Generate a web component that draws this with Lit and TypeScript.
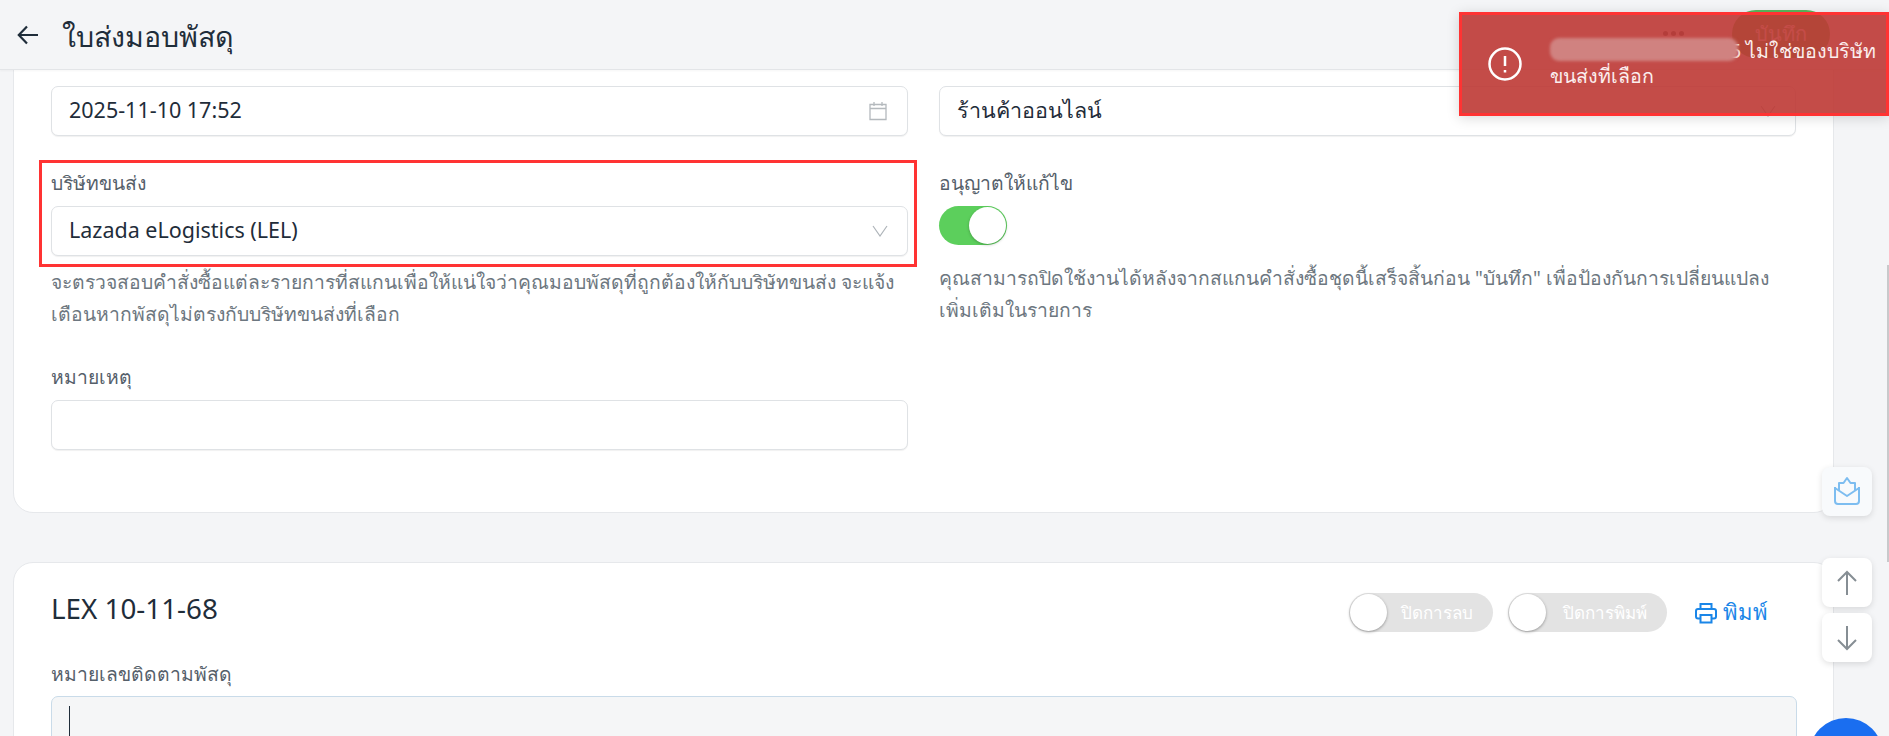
import { LitElement, html, css } from "lit";
import { customElement } from "lit/decorators.js";

const chevron = html`<svg class="chev" viewBox="0 0 16 12" width="16" height="12"><path d="M1 1l7 10 7-10" fill="none" stroke="#aeb4b9" stroke-width="1.2"/></svg>`;

@customElement("app-root")
export class AppRoot extends LitElement {
  static styles = css`
    :host { display: block; height: 736px; overflow: hidden; position: relative; background: #f4f5f7;
      font-family: "Noto Sans", "Open Sans", sans-serif; color: #1f2d3a; }
    .page { display: flex; flex-direction: column; height: 736px; }
    header { flex: none; height: 69px; border-bottom: 1px solid #e3e5e8; display: flex; align-items: center; padding: 0 59px 0 17px; gap: 23px; background: #f4f5f7; position: relative; z-index: 2; box-shadow: 0 1px 2px rgba(0,0,0,.04); }
    header h1 { margin: 0; padding-top: 2px; font-size: 28.6px; font-weight: 400; line-height: 40px; flex: 1; }
    .dots { display: flex; gap: 3px; margin-right: 25px; margin-top: -3px; }
    .dots i { width: 5px; height: 5px; border-radius: 50%; background: #5c6670; }
    .save { width: 98px; height: 48px; border-radius: 24px; background: #5cb85c; color: #fff; font-size: 20px; display: flex; align-items: center; justify-content: center; margin-top: -2px; }
    main { flex: 1; overflow: hidden; padding: 0 55px 0 13px; }
    .card { background: #fff; border: 1px solid #e6e8eb; border-radius: 20px; padding: 30px 36px 0 37px; }
    .card.first { margin-top: -50px; padding-top: 28px; padding-bottom: 62px; }
    .card.second { margin-top: 49px; height: 300px; }
    .grid { display: grid; grid-template-columns: 857px 857px; column-gap: 31px; }
    label { display: block; font-size: 19.3px; line-height: 28px; color: #55606a; margin-bottom: 9px; }
    .field { position: relative; height: 50px; box-sizing: border-box; border: 1px solid #dfe2e5; border-radius: 7px; background: #fff; box-shadow: 0 1px 1px rgba(0,0,0,.06); display: flex; align-items: center; justify-content: space-between; padding: 0 19px 0 17px; font-size: 21.5px; }
    .val { margin-bottom: 3px; }
    .row2 { margin-top: 33px; }
    .help { font-size: 19.3px; line-height: 31.5px; color: #6d7780; margin: 10px 0 0; }
    .help.r { margin-top: 17px; }
    .switch { display: block; width: 68px; height: 39px; border-radius: 20px; background: #5ccf5c; position: relative; margin-top: 3px; }
    .switch::after { content: ""; position: absolute; right: 1px; top: 1px; width: 37px; height: 37px; border-radius: 50%; background: #fff; box-shadow: 0 1px 3px rgba(0,0,0,.25); }
    .note { margin-top: 34px; width: 857px; }
    .titlebar { display: flex; align-items: center; height: 39px; }
    h2 { margin: 0; font-size: 27.8px; font-weight: 400; flex: 1; margin-top: -10px; }
    .pill { height: 39px; border-radius: 20px; background: #e3e3e3; color: #fff; font-size: 17px; display: flex; align-items: center; justify-content: flex-end; padding-right: 20px; box-sizing: border-box; position: relative; margin-right: 15px; }
    .pill::before { content: ""; position: absolute; left: 1px; top: 1px; width: 37px; height: 37px; border-radius: 50%; background: #fff; box-shadow: 0 1px 3px rgba(0,0,0,.35); }
    .p1 { width: 144px; } .p2 { width: 159px; }
    .print { display: flex; align-items: center; gap: 6px; color: #1a86e8; font-size: 22px; margin: 0 29px 0 13px; }
    .lab2 { margin-top: 28px; margin-bottom: 8px; }
    .tracking { height: 60px; border: 1px solid #c9dbe9; border-radius: 7px; background: #f5f6f7; padding: 9px 17px; box-sizing: border-box; }
    .caret { width: 1px; height: 40px; background: #1f2d3a; }
    .toast { position: absolute; left: 1459px; top: 12px; width: 430px; height: 104px; box-sizing: border-box; border: 3px solid #ff3333; background: rgba(190,56,52,.9); display: flex; align-items: center; padding: 0 0 0 25px; gap: 27px; color: #fbeeee; font-size: 19.6px; line-height: 25px; box-shadow: 0 2px 12px rgba(0,0,0,.15); z-index: 5; }
    .toast svg { flex: none; }
    .toast p { margin: -2px 0 0; white-space: nowrap; }
    .blur { display: inline-block; width: 188px; height: 23px; background: #d08280; border-radius: 9px; vertical-align: -3px; margin-right: -8px; filter: blur(1.5px); position: relative; }
    .fabs { position: absolute; z-index: 4; left: 1822px; top: 467px; display: flex; flex-direction: column; width: 50px; }
    .fab { width: 50px; height: 49px; border-radius: 8px; background: #fff; box-shadow: 0 2px 6px rgba(0,0,0,.12); display: flex; align-items: center; justify-content: center; }
    .fab.mail { background: #f8fafc; margin-bottom: 42px; }
    .fab.mail svg { margin-top: -3px; }
    .fab.down { margin-top: 6px; }
    .chat { position: absolute; z-index: 4; left: 1809px; top: 718px; width: 74px; height: 74px; border-radius: 50%; background: #1a6ef0; }
    .thumb { position: absolute; z-index: 4; right: 0; top: 265px; width: 2px; height: 297px; background: #c8c9cb; }
    .redbox { position: absolute; z-index: 3; left: 39px; top: 160px; width: 878px; height: 107px; box-sizing: border-box; border: 3px solid #ff3333; }
  `;

  render() {
    return html`
      <div class="page">
        <header>
          <svg width="22" height="20" viewBox="0 0 22 20"><path d="M21 10H2M10 1.500L1.800 10l8.200 8.500" fill="none" stroke="#1f2d3a" stroke-width="2.200"/></svg>
          <h1>ใบส่งมอบพัสดุ</h1>
          <div class="dots"><i></i><i></i><i></i></div>
          <div class="save">บันทึก</div>
        </header>
        <main>
          <section class="card first">
            <div class="grid">
              <div>
                <label>วันที่</label>
                <div class="field"><span class="val">2025-11-10 17:52</span>
                  <svg width="20" height="20" viewBox="0 0 20 20"><path d="M2 3.500h16v15H2zM2 7.500h16M6 1v4M14 1v4" fill="none" stroke="#b4b9bd" stroke-width="1.300"/></svg>
                </div>
              </div>
              <div>
                <label>ช่องทาง</label>
                <div class="field"><span class="val">ร้านค้าออนไลน์</span> ${chevron}</div>
              </div>
              <div class="row2">
                <label>บริษัทขนส่ง</label>
                <div class="field"><span class="val">Lazada eLogistics (LEL)</span> ${chevron}</div>
                <p class="help">จะตรวจสอบคำสั่งซื้อแต่ละรายการที่สแกนเพื่อให้แน่ใจว่าคุณมอบพัสดุที่ถูกต้องให้กับบริษัทขนส่ง จะแจ้งเตือนหากพัสดุไม่ตรงกับบริษัทขนส่งที่เลือก</p>
              </div>
              <div class="row2">
                <label>อนุญาตให้แก้ไข</label>
                <span class="switch"></span>
                <p class="help r">คุณสามารถปิดใช้งานได้หลังจากสแกนคำสั่งซื้อชุดนี้เสร็จสิ้นก่อน "บันทึก" เพื่อป้องกันการเปลี่ยนแปลงเพิ่มเติมในรายการ</p>
              </div>
            </div>
            <div class="note">
              <label>หมายเหตุ</label>
              <div class="field"></div>
            </div>
          </section>
          <section class="card second">
            <div class="titlebar">
              <h2>LEX 10-11-68</h2>
              <div class="pill p1">ปิดการลบ</div>
              <div class="pill p2">ปิดการพิมพ์</div>
              <div class="print">
                <svg width="22" height="22" viewBox="0 0 22 22" fill="none" stroke="#1a86e8" stroke-width="2"><path d="M5.500 7V2h11v5M5.500 16.500H3a2 2 0 0 1-2-2V9a2 2 0 0 1 2-2h16a2 2 0 0 1 2 2v5.500a2 2 0 0 1-2 2h-2.500"/><path d="M5.500 13h11v7.500h-11z"/></svg>
                พิมพ์
              </div>
            </div>
            <label class="lab2">หมายเลขติดตามพัสดุ</label>
            <div class="tracking"><div class="caret"></div></div>
          </section>
        </main>
      </div>
      <div class="redbox"></div>
      <div class="toast">
        <svg width="36" height="36" viewBox="0 0 36 36" fill="none" stroke="#fff" stroke-width="2.500"><circle cx="18" cy="18" r="15.500"/><path d="M18 10v10M18 24v2.500"/></svg>
        <p><span class="blur"></span>5 ไม่ใช่ของบริษัท<br />ขนส่งที่เลือก</p>
      </div>
      <div class="fabs">
        <div class="fab mail">
          <svg width="28" height="29" viewBox="0 0 28 29" fill="none" stroke="#7dbdf0" stroke-width="2" stroke-linejoin="round"><path d="M2 11v14a3 3 0 0 0 3 3h18a3 3 0 0 0 3-3V11"/><path d="M2 12l12 8 12-8"/><path d="M6 14V7h4.500L14 2l3.500 5H22v7"/></svg>
        </div>
        <div class="fab">
          <svg width="20" height="26" viewBox="0 0 20 26" fill="none" stroke="#868e94" stroke-width="2"><path d="M10 25V2M1 11l9-9 9 9"/></svg>
        </div>
        <div class="fab down">
          <svg width="20" height="26" viewBox="0 0 20 26" fill="none" stroke="#868e94" stroke-width="2"><path d="M10 1v23M1 15l9 9 9-9"/></svg>
        </div>
      </div>
      <div class="chat"></div>
      <div class="thumb"></div>
    `;
  }
}
